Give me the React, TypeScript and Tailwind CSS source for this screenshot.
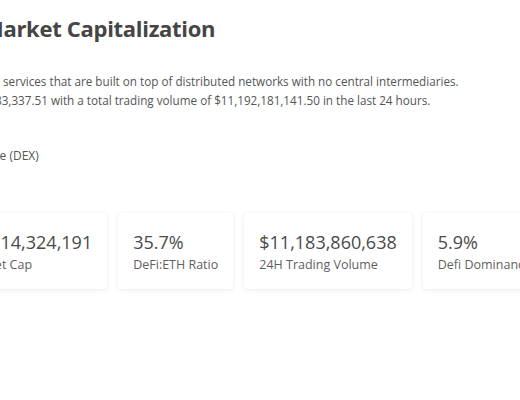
import React from "react";

const cards = [
  { value: "$4,014,324,191", label: "Market Cap" },
  { value: "35.7%", label: "DeFi:ETH Ratio" },
  { value: "$11,183,860,638", label: "24H Trading Volume" },
  { value: "5.9%", label: "Defi Dominance" },
];

export default function App() {
  return (
    <div className="w-[520px] h-[400px] overflow-hidden bg-white font-['Open_Sans',sans-serif]">
      <div className="pt-[12px]">
        <h1 className="ml-[-17px] whitespace-nowrap text-[22px] leading-[32px] font-bold tracking-[-0.3px] text-[#454545]">
          Market Capitalization
        </h1>
        <div className="mt-[28px] text-[11.7px] leading-[19px] text-[#555] whitespace-nowrap">
          <p className="ml-[3px]">services that are built on top of distributed networks with no central intermediaries.</p>
          <p className="ml-[-5px]">83,337.51 with a total trading volume of $11,192,181,141.50 in the last 24 hours.</p>
        </div>
        <p className="mt-[36px] ml-[-47px] whitespace-nowrap text-[12px] leading-[19px] text-[#555]">
          Exchange (DEX)
        </p>
        <div className="mt-[48px] ml-[-50px] flex gap-[11px]">
          {cards.map((c) => (
            <div
              key={c.label}
              className="shrink-0 rounded-[4px] bg-white px-[15px] pt-[17px] pb-[14px] shadow-[0_1px_5px_rgba(0,0,0,0.09)]"
            >
              <div className="whitespace-nowrap text-[18px] leading-[25px] text-[#4a4a4a]">{c.value}</div>
              <div className="whitespace-nowrap text-[12.5px] leading-[20px] text-[#5f5f5f]">{c.label}</div>
            </div>
          ))}
        </div>
      </div>
    </div>
  );
}
